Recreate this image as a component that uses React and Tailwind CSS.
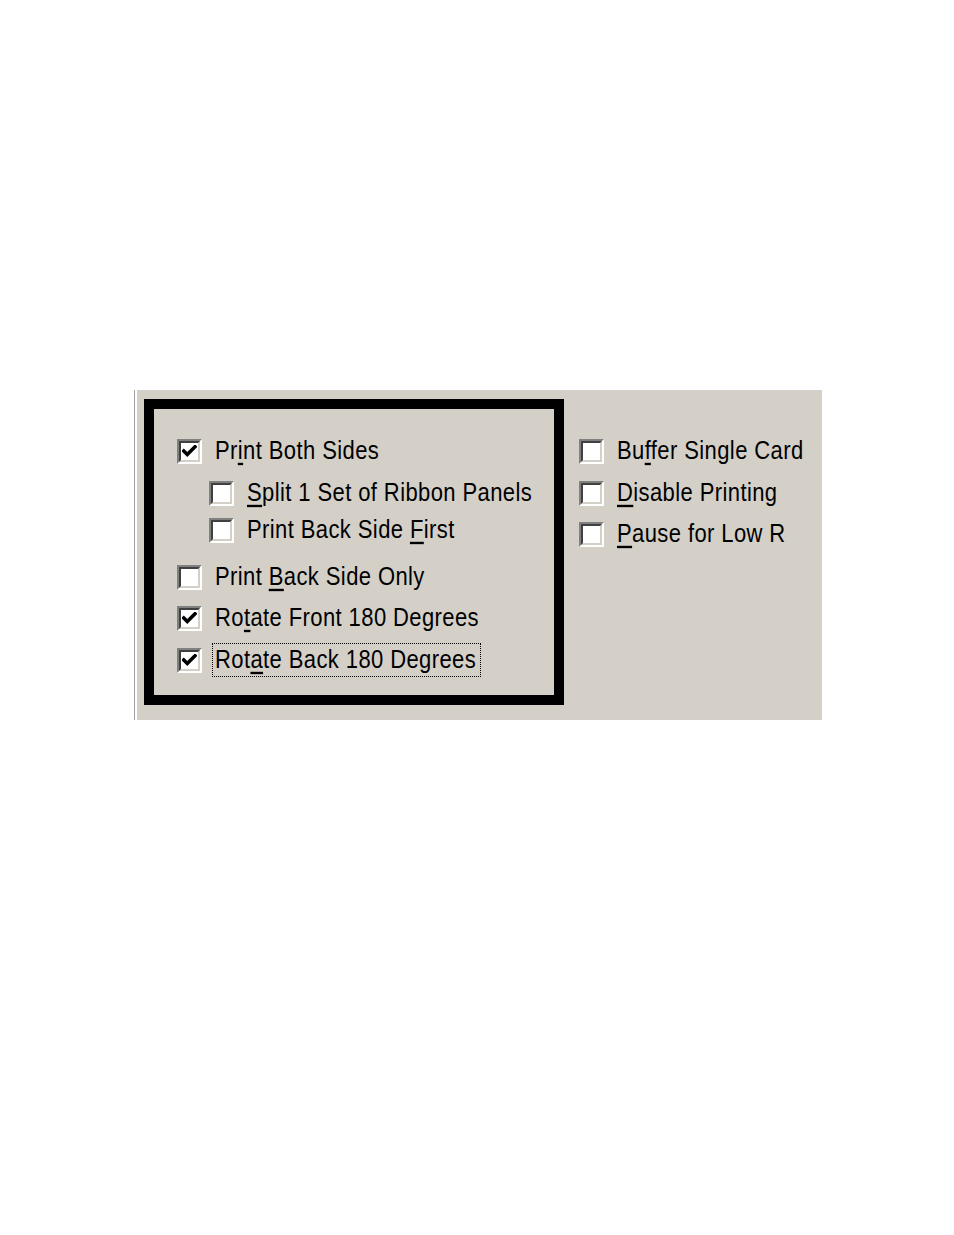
import React from "react";

const Box = ({ checked }) => (
  <div className="w-[25px] h-[25px] shrink-0 border-2 border-t-[#808080] border-l-[#808080] border-b-white border-r-white">
    <div className="w-full h-full bg-white border-2 border-t-[#404040] border-l-[#404040] border-b-[#d4d0c8] border-r-[#d4d0c8] flex items-center justify-center">
      {checked && (
        <svg width="15" height="13" viewBox="0 0 15 13">
          <path d="M1.8 6 L5.3 9.5 L13 1.8" fill="none" stroke="#000" strokeWidth="3.6" strokeLinecap="square" />
        </svg>
      )}
    </div>
  </div>
);

const Label = ({ pre, u, post }) => (
  <span className="inline-block scale-y-[1.18] origin-center whitespace-nowrap tracking-[0.4px]">
    {pre}
    <span className="underline underline-offset-[3px] decoration-[1.5px]">{u}</span>
    {post}
  </span>
);

const Row = ({ checked, label, focus, className = "" }) => (
  <div className={`flex items-center h-[34px] ${className}`}>
    <Box checked={checked} />
    <div
      className={`ml-[10px] h-[34px] flex items-center pl-[2px] ${
        focus ? "border border-dotted border-black pr-[4px]" : "border border-transparent pr-[2px]"
      }`}
    >
      <Label {...label} />
    </div>
  </div>
);

export default function App() {
  return (
    <div
      className="bg-white w-[954px] h-[1235px] pt-[390px] pl-[134px] text-black text-[22px] leading-none"
      style={{ fontFamily: '"Liberation Sans", Arial, sans-serif' }}
    >
      <div className="flex w-[688px] h-[330px] bg-[#d4d0c8] border-l border-l-[#a0a0a0]">
        <div className="w-[2px] bg-white" />
        <div className="ml-[7px] mt-[9px] w-[420px] h-[306px] border-[10px] border-black pt-[25px] pl-[23px]">
          <Row checked label={{ pre: "Pr", u: "i", post: "nt Both Sides" }} />
          <Row className="mt-[8px] ml-[32px]" label={{ pre: "", u: "S", post: "plit 1 Set of Ribbon Panels" }} />
          <Row className="mt-[3px] ml-[32px]" label={{ pre: "Print Back Side ", u: "F", post: "irst" }} />
          <Row className="mt-[13px]" label={{ pre: "Print ", u: "B", post: "ack Side Only" }} />
          <Row checked className="mt-[7px]" label={{ pre: "Ro", u: "t", post: "ate Front 180 Degrees" }} />
          <Row checked focus className="mt-[8px]" label={{ pre: "Rot", u: "a", post: "te Back 180 Degrees" }} />
        </div>
        <div className="ml-[15px] pt-[44px]">
          <Row label={{ pre: "Bu", u: "f", post: "fer Single Card" }} />
          <Row className="mt-[8px]" label={{ pre: "", u: "D", post: "isable Printing" }} />
          <Row className="mt-[7px]" label={{ pre: "", u: "P", post: "ause for Low R" }} />
        </div>
      </div>
    </div>
  );
}
